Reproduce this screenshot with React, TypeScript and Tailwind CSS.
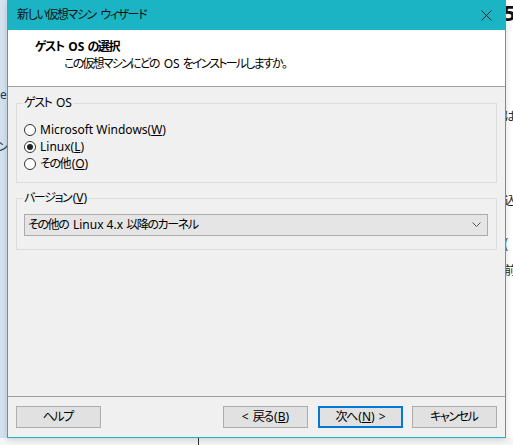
import React from "react";

const jp = "font-['Noto_Sans','Noto_Sans_CJK_JP',sans-serif] [font-feature-settings:'palt']";
const JP = /([\u3000-\u30ff\u4e00-\u9fff]+)/;

function T({ s, tight }: { s: string; tight?: boolean }) {
  const parts = s.split(JP);
  return (
    <>
      {parts.map((p, i) =>
        /[\u3000-\u30ff\u4e00-\u9fff]/.test(p) ? (
          <span key={i}>
            <span className={tight ? "tracking-[-1.8px]" : "tracking-[-1.4px]"}>{p.slice(0, -1)}</span>
            {p.slice(-1)}
          </span>
        ) : (
          <span key={i}>{p}</span>
        )
      )}
    </>
  );
}

function Radio({ checked, label, acc }: { checked?: boolean; label: string; acc: string }) {
  return (
    <div className="flex items-center h-[17px]">
      <span className="w-[12px] h-[12px] rounded-full border border-[#333] bg-white flex items-center justify-center">
        {checked && <span className="w-[6px] h-[6px] rounded-full bg-[#222]" />}
      </span>
      <span className="ml-[4px] text-[12px] text-[#000] leading-none">
        <T s={label} />(<span className="underline">{acc}</span>)
      </span>
    </div>
  );
}

function Btn({ children, def }: { children: React.ReactNode; def?: boolean }) {
  return (
    <div
      className={
        "w-[85px] h-[22px] flex items-center justify-center text-[12px] bg-[#e1e1e1] " +
        (def ? "border-2 border-[#0078d7]" : "border border-[#adadad]")
      }
    >
      {children}
    </div>
  );
}

export default function App() {
  return (
    <div className={"relative w-[513px] h-[445px] overflow-hidden bg-[#f3f5f6] " + jp}>
      {/* desktop behind */}
      <div className="absolute left-0 top-0 w-[8px] h-[438px] bg-[#d3e2ee]" />
      <div className="absolute left-0 top-[86px] text-[12px] text-[#1f3a5a]">e</div>
      <div className="absolute left-[-2px] top-[138px] text-[12px] text-[#1f3a5a]">ンl</div>
      <div className="absolute left-[500px] top-0 w-[13px] h-[438px] bg-white" />
      <div className="absolute left-[503px] top-[-4px] text-[22px] font-bold text-[#111]">5</div>
      <div className="absolute left-[504px] top-[108px] text-[12px] text-[#222]">は</div>
      <div className="absolute left-[504px] top-[192px] text-[12px] text-[#222]">込</div>
      <div className="absolute left-[504px] top-[232px] text-[14px] text-[#2a4b8a]">(</div>
      <div className="absolute left-[504px] top-[262px] text-[12px] text-[#222]">前</div>
      <div className="absolute left-[198px] top-[438px] w-[1px] h-[7px] bg-[#333]" />

      {/* dialog */}
      <div className="absolute left-[7px] top-0 w-[499px] h-[438px] border border-t-0 border-[#1ab4c4] bg-[#f0f0f0] flex flex-col shadow-[0_2px_6px_rgba(0,0,0,0.15)]">
        {/* title bar */}
        <div className="h-[30px] bg-[#1ab4c4] flex items-center pl-[9px] pr-[10px] shrink-0">
          <span className="text-[12px] text-[#111]">
            <T s="新しい仮想マシン ウィザード" />
          </span>
          <div className="flex-1" />
          <svg width="11" height="11" viewBox="0 0 11 11" className="mr-[3px]">
            <path d="M0.5 0.5 L10.5 10.5 M10.5 0.5 L0.5 10.5" stroke="#222" strokeWidth="1" />
          </svg>
        </div>
        {/* header */}
        <div className="h-[57px] bg-white border-b border-[#a0a0a0] shrink-0 pt-[9px]">
          <div className="pl-[27px] text-[12px] font-bold text-[#000] leading-[16px]">
            <T s="ゲスト OS の選択" />
          </div>
          <div className="pl-[56px] mt-[1px] text-[12px] text-[#000] leading-[16px]">
            <T tight s="この仮想マシンにどの OS をインストールしますか。" />
          </div>
        </div>
        {/* body */}
        <div className="flex-1 px-[8px] pt-[16px]">
          <div className="relative border border-[#dcdcdc] h-[80px] pt-[17px] pl-[7px]">
            <span className="absolute left-[6px] top-[-9px] px-[1px] bg-[#f0f0f0] text-[12px] leading-[16px]">
              <T s="ゲスト OS" />
            </span>
            <Radio label="Microsoft Windows" acc="W" />
            <Radio checked label="Linux" acc="L" />
            <Radio label="その他" acc="O" />
          </div>
          <div className="relative border border-[#dcdcdc] h-[52px] mt-[15px] pt-[15px] pl-[7px] pr-[8px]">
            <span className="absolute left-[6px] top-[-9px] px-[1px] bg-[#f0f0f0] text-[12px] leading-[16px]">
              <T s="バージョン" />(<span className="underline">V</span>)
            </span>
            <div className="h-[22px] bg-[#e5e5e5] border border-[#acacac] flex items-center pl-[3px] pr-[6px]">
              <span className="text-[12px]">
                <T s="その他の Linux 4.x 以降のカーネル" />
              </span>
              <div className="flex-1" />
              <svg width="9" height="6" viewBox="0 0 9 6">
                <path d="M0.5 0.5 L4.5 4.5 L8.5 0.5" stroke="#555" strokeWidth="1" fill="none" />
              </svg>
            </div>
          </div>
        </div>
        {/* footer */}
        <div className="h-[41px] border-t border-[#a0a0a0] shrink-0 flex items-start pt-[9px] px-[8px] text-[#000]">
          <Btn>
            <T s="ヘルプ" />
          </Btn>
          <div className="flex-1" />
          <Btn>
            <span className="mr-[4px]">&lt;</span>
            <T s="戻る" />(<span className="underline">B</span>)
          </Btn>
          <div className="w-[10px]" />
          <Btn def>
            <T s="次へ" />(<span className="underline">N</span>)<span className="ml-[4px]">&gt;</span>
          </Btn>
          <div className="w-[9px]" />
          <Btn>
            <T s="キャンセル" />
          </Btn>
        </div>
      </div>
    </div>
  );
}
